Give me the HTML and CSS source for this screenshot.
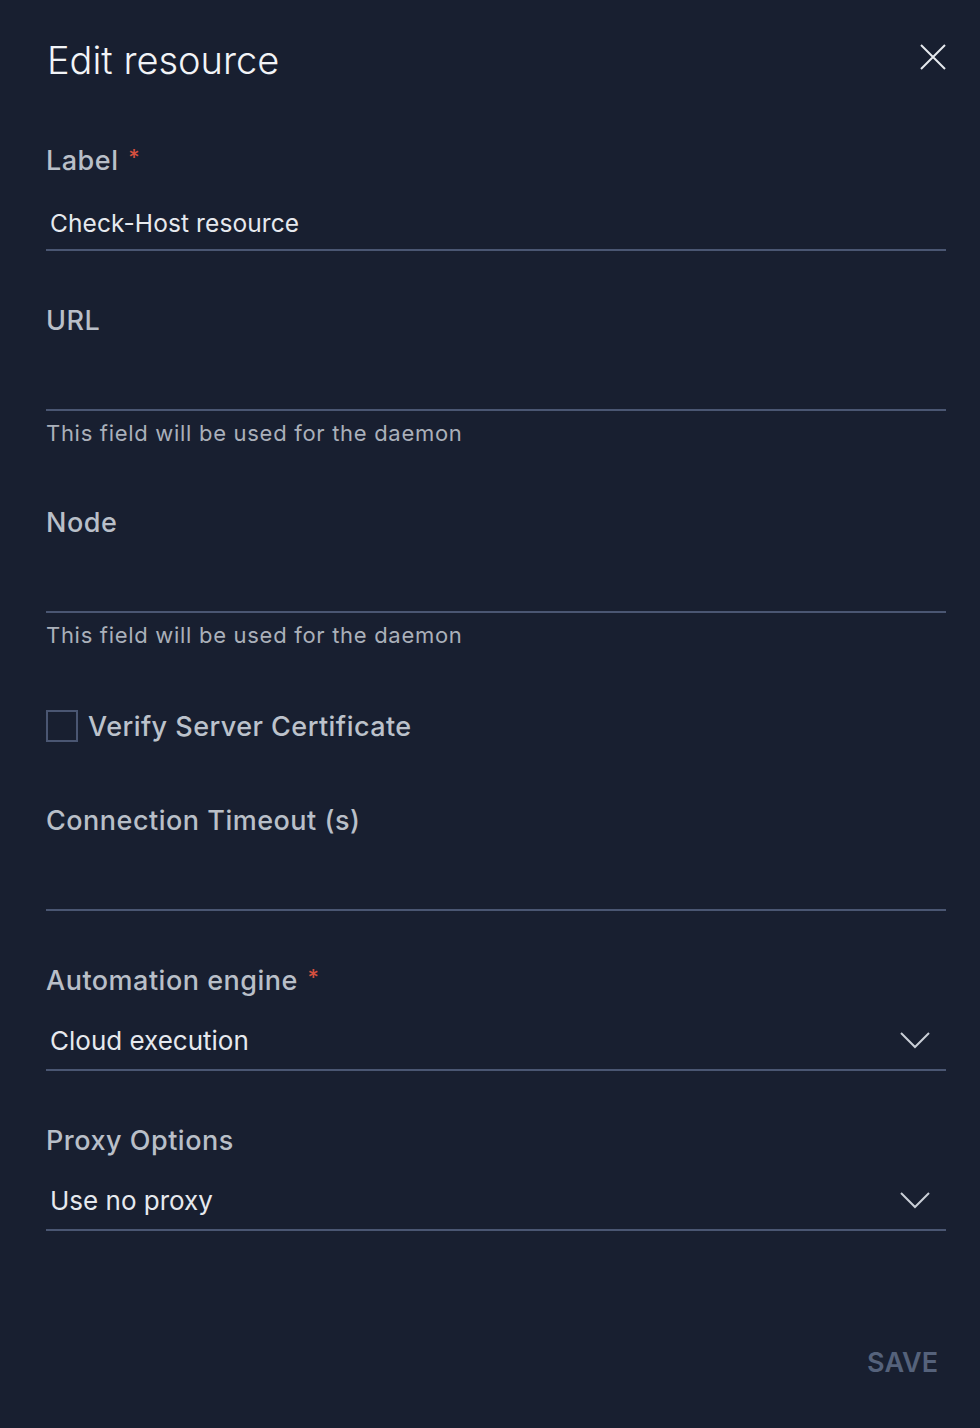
FILE: index.html
```html
<!DOCTYPE html>
<html>
<head>
<meta charset="utf-8">
<link rel="stylesheet" href="styles.css">
</head>
<body>
<div class="dialog">
  <div class="header">
    <h1 class="title">Edit resource</h1>
    <button class="close" aria-label="Close">
      <svg width="26" height="26" viewBox="0 0 26 26"><path d="M1 1 L25 25 M25 1 L1 25" stroke="#e6e9ee" stroke-width="2" fill="none"/></svg>
    </button>
  </div>

  <div class="field f-label">
    <div class="label">Label <span class="req">*</span></div>
    <div class="input"><span class="value value-text">Check-Host resource</span></div>
  </div>

  <div class="field f-url">
    <div class="label">URL</div>
    <div class="input"></div>
    <div class="help">This field will be used for the daemon</div>
  </div>

  <div class="field f-node">
    <div class="label">Node</div>
    <div class="input"></div>
    <div class="help">This field will be used for the daemon</div>
  </div>

  <div class="check-row">
    <span class="checkbox"></span>
    <span class="check-label">Verify Server Certificate</span>
  </div>

  <div class="field f-timeout">
    <div class="label">Connection Timeout (s)</div>
    <div class="input"></div>
  </div>

  <div class="field f-engine">
    <div class="label">Automation engine <span class="req">*</span></div>
    <div class="input select"><span class="value">Cloud execution</span>
      <svg class="chev" width="30" height="17" viewBox="0 0 30 17"><path d="M1 1 L15 15 L29 1" stroke="#c9ced6" stroke-width="2" fill="none"/></svg>
    </div>
  </div>

  <div class="field f-proxy">
    <div class="label">Proxy Options</div>
    <div class="input select"><span class="value">Use no proxy</span>
      <svg class="chev" width="30" height="17" viewBox="0 0 30 17"><path d="M1 1 L15 15 L29 1" stroke="#c9ced6" stroke-width="2" fill="none"/></svg>
    </div>
  </div>

  <div class="footer">
    <button class="save">SAVE</button>
  </div>
</div>
</body>
</html>
```
FILE: styles.css
```css
html, body {
  margin: 0;
  padding: 0;
  background: #181f30;
}
body {
  font-family: Inter, "Open Sans", sans-serif;
  color: #e6e9ee;
  width: 980px;
  height: 1428px;
  overflow: hidden;
}
.dialog {
  display: flex;
  flex-direction: column;
  padding: 0 34px 0 46px;
}
.header {
  display: flex;
  justify-content: space-between;
  align-items: center;
  height: 120px;
}
.title {
  margin: 0;
  font-weight: 300;
  font-size: 38px;
  line-height: 50px;
  color: #f2f4f7;
  padding-left: 1px;
}
.close {
  background: none;
  border: 0;
  padding: 0;
  width: 26px;
  height: 26px;
  margin-top: -6px;
}
.field {
  display: flex;
  flex-direction: column;
}
.label {
  font-size: 27px;
  font-weight: 500;
  letter-spacing: 0.5px;
  color: #b9bfc8;
  height: 40px;
  line-height: 41px;
}
.req {
  color: #d4503f;
  font-size: 22px;
  line-height: 0;
  vertical-align: 5px;
  margin-left: 2px;
}
.input {
  box-sizing: border-box;
  height: 71px;
  border-bottom: 2px solid #4a5672;
  display: flex;
  align-items: flex-end;
  justify-content: space-between;
}
.value {
  font-size: 26px;
  font-weight: 400;
  line-height: 34px;
  padding-bottom: 11px;
  color: #e6e9ee;
  padding-left: 4px;
}
.value-text {
  font-size: 24.5px;
  letter-spacing: 0.1px;
  padding-bottom: 9px;
}
.chev {
  margin-right: 16px;
  margin-bottom: 20px;
}
.help {
  font-size: 22px;
  letter-spacing: 0.7px;
  color: #aab0ba;
  line-height: 30px;
  margin-top: 7px;
}
.f-label { margin-top: 20px; }
.f-url { margin-top: 49px; }
.f-node { margin-top: 54px; }
.check-row {
  display: flex;
  align-items: center;
  margin-top: 60px;
  height: 32px;
}
.checkbox {
  box-sizing: border-box;
  width: 32px;
  height: 32px;
  border: 2px solid #4a5672;
  margin-right: 10px;
}
.check-label {
  font-size: 27px;
  font-weight: 500;
  letter-spacing: 0.45px;
  color: #bcc2cb;
}
.f-timeout { margin-top: 58px; }
.f-engine { margin-top: 49px; }
.f-proxy { margin-top: 49px; }
.footer {
  display: flex;
  justify-content: flex-end;
  margin-top: 112px;
}
.save {
  background: none;
  border: 0;
  font-family: inherit;
  font-size: 27px;
  line-height: 40px;
  font-weight: 600;
  color: #55627b;
  padding: 0 8px 0 0;
}
```
